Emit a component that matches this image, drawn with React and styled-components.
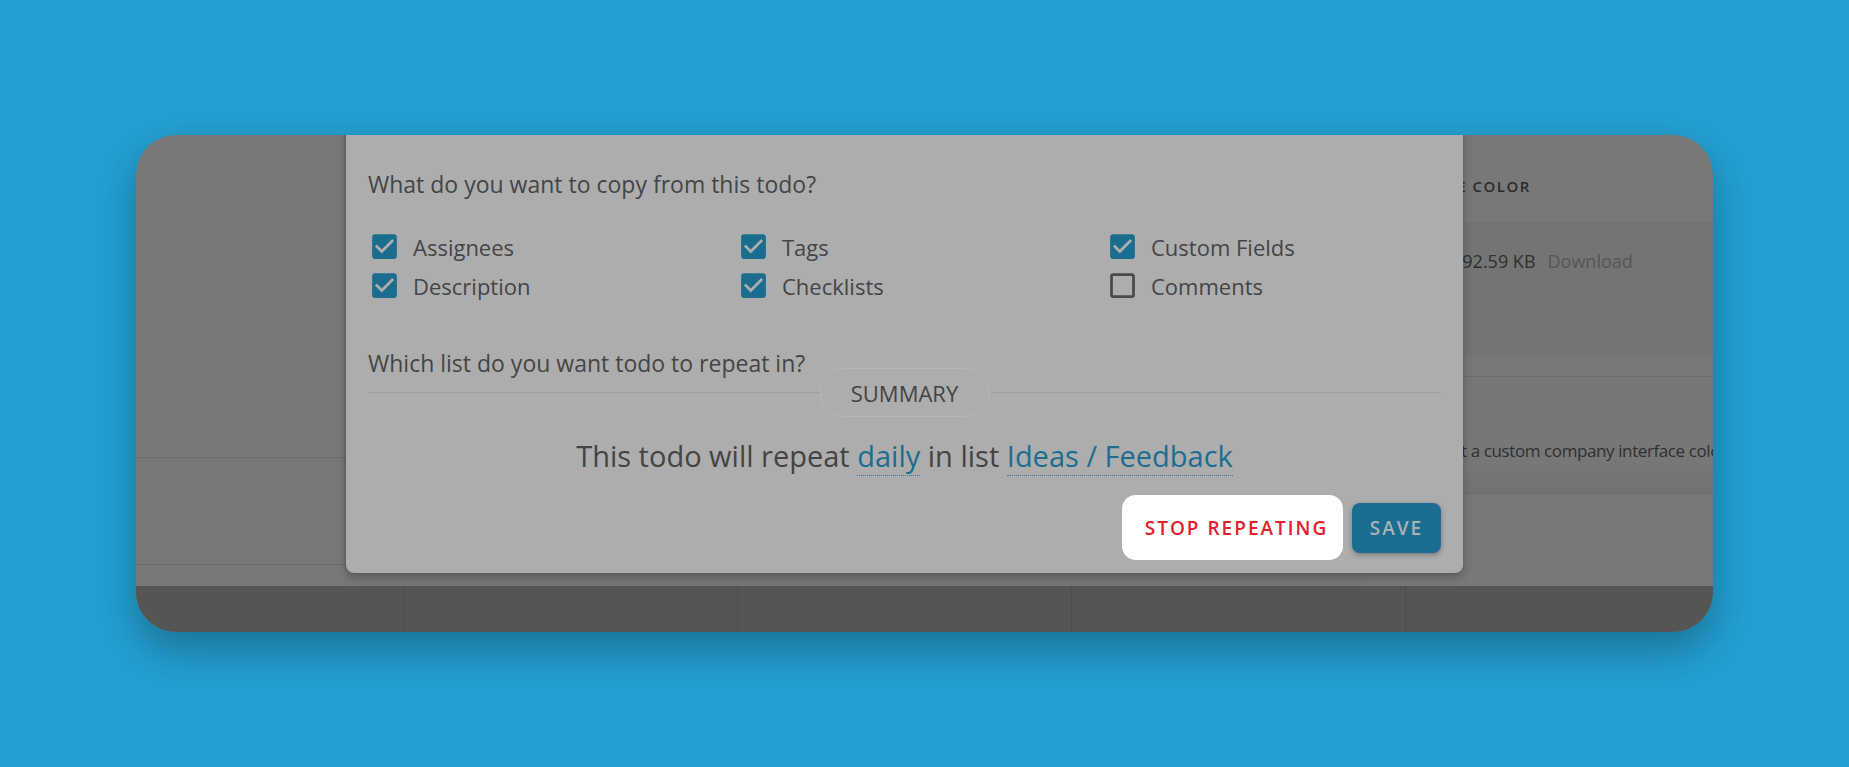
import React from 'react';
import styled, { createGlobalStyle } from 'styled-components';

const GlobalStyle = createGlobalStyle`
  html, body {
    margin: 0;
    padding: 0;
  }
  body {
    background: #239fd1;
    font-family: "Open Sans", "Noto Sans", sans-serif;
  }
`

const OPTIONS = [
  { label: 'Assignees', checked: true },
  { label: 'Tags', checked: true },
  { label: 'Custom Fields', checked: true },
  { label: 'Description', checked: true },
  { label: 'Checklists', checked: true },
  { label: 'Comments', checked: false },
]

// material check_box / check_box_outline_blank
const CHECKED = 'M19 3H5c-1.11 0-2 .9-2 2v14c0 1.1.89 2 2 2h14c1.11 0 2-.9 2-2V5c0-1.1-.89-2-2-2zm-9 14l-5-5 1.41-1.41L10 14.17l7.59-7.59L19 8l-9 9z'
const UNCHECKED = 'M19 5v14H5V5h14m0-2H5c-1.1 0-2 .9-2 2v14c0 1.1.9 2 2 2h14c1.1 0 2-.9 2-2V5c0-1.1-.9-2-2-2z'

const CheckIcon = ({ checked }) => (
  <BoxIcon viewBox="0 0 24 24" $checked={checked}>
    <path d={checked ? CHECKED : UNCHECKED} />
  </BoxIcon>
)

const App = () => {
  return (
    <Page>
      <GlobalStyle />
      <Card>
        <Workspace>
          <Sidebar>
            <SideBlock $h={322} />
            <SideBlock $h={106} />
          </Sidebar>
          <Board />
          <SettingsPanel>
            <PanelHead>INTERFACE COLOR</PanelHead>
            <PanelRow $h={135} $indent={86} $top={27} $shade>
              <FileSize>192.59 KB</FileSize>
              <FileLink>Download</FileLink>
            </PanelRow>
            <PanelGap />
            <PanelRow $h={118} $indent={77} $top={62} $fade>
              <PanelText>Set a custom company interface color for every member</PanelText>
            </PanelRow>
          </SettingsPanel>
        </Workspace>
        <Footer>
          <FooterCell />
          <FooterCell />
          <FooterCell />
          <FooterCell />
          <FooterCell />
        </Footer>

        <Modal>
          <Question>What do you want to copy from this todo?</Question>
          <OptionsGrid>
            {OPTIONS.map((o) => (
              <Option key={o.label}>
                <CheckIcon checked={o.checked} />
                {o.label}
              </Option>
            ))}
          </OptionsGrid>
          <Question $gap={42}>Which list do you want todo to repeat in?</Question>
          <SummaryRule>
            <RuleLine />
            <Pill>SUMMARY</Pill>
            <RuleLine />
          </SummaryRule>
          <Sentence>
            This todo will repeat <Pick>daily</Pick> in list <Pick>Ideas / Feedback</Pick>
          </Sentence>
          <Actions>
            <StopButton>STOP REPEATING</StopButton>
            <SaveButton>SAVE</SaveButton>
          </Actions>
        </Modal>
      </Card>
    </Page>
  )
};

export default App;

const Page = styled.div`
  min-height: 100vh;
  display: flex;
  align-items: center;
  justify-content: center;
`
const Card = styled.div`
  position: relative;
  width: 1577px;
  height: 497px;
  border-radius: 40px;
  overflow: hidden;
  background: #787878;
  display: flex;
  flex-direction: column;
  box-shadow: 0 18px 40px rgba(0, 0, 0, 0.28);
`
const Workspace = styled.div`
  height: 451px;
  display: grid;
  grid-template-columns: 210px 1fr 347px;
`
const Sidebar = styled.div`
  display: flex;
  flex-direction: column;
`
const SideBlock = styled.div`
  height: ${(p) => p.$h}px;
  border-bottom: 1px solid #6c6c6c;
`
const Board = styled.div`
  background: #777777;
`
const SettingsPanel = styled.div`
  display: flex;
  flex-direction: column;
  overflow: hidden;
`
const PanelHead = styled.div`
  height: 87px;
  box-sizing: border-box;
  padding: 14px 0 0 9px;
  display: flex;
  align-items: center;
  font-size: 15px;
  font-weight: 600;
  letter-spacing: 1.5px;
  color: #2b2b2b;
`
const PanelRow = styled.div`
  height: ${(p) => p.$h}px;
  box-sizing: border-box;
  padding: ${(p) => p.$top}px 0 0 ${(p) => p.$indent}px;
  display: flex;
  gap: 12px;
  white-space: nowrap;
  background: ${(p) => (p.$shade ? '#747474' : p.$fade ? 'linear-gradient(#777777 75%, #717171)' : 'transparent')};
`
const PanelGap = styled.div`
  height: 19px;
  border-bottom: 1px solid #6b6b6b;
`
const FileSize = styled.span`
  font-size: 18px;
  line-height: 24px;
  color: #2f2f2f;
`
const FileLink = styled.span`
  font-size: 18px;
  line-height: 24px;
  color: #565656;
`
const PanelText = styled.span`
  font-size: 17px;
  line-height: 24px;
  letter-spacing: -0.4px;
  color: #2f2f2f;
`
const Footer = styled.div`
  flex: 1;
  background: #555555;
  display: grid;
  grid-template-columns: 268px repeat(4, 334px);
`
const FooterCell = styled.div`
  border-right: 1px solid #4d4d4d;
`

const Modal = styled.div`
  position: absolute;
  left: 210px;
  top: -20px;
  width: 1117px;
  box-sizing: border-box;
  padding: 53px 22px 13px;
  background: #adadad;
  border-radius: 8px;
  box-shadow: 0 4px 10px rgba(0, 0, 0, 0.25), -1px 0 2px rgba(0, 0, 0, 0.15);
  color: #454545;
`
const Question = styled.p`
  margin: ${(p) => p.$gap || 0}px 0 0;
  font-size: 23px;
  line-height: 32px;
`
const OptionsGrid = styled.div`
  margin-top: 27px;
  display: grid;
  grid-template-columns: 369px 369px 1fr;
  grid-auto-rows: 39px;
`
const Option = styled.label`
  display: flex;
  align-items: center;
  gap: 12px;
  font-size: 22px;
`
const BoxIcon = styled.svg`
  width: 33px;
  height: 33px;
  flex-shrink: 0;
  fill: ${(p) => (p.$checked ? '#1b6d90' : '#4a4a4a')};
`
const SummaryRule = styled.div`
  margin-top: -11px;
  height: 49px;
  display: flex;
  align-items: center;
`
const RuleLine = styled.div`
  flex: 1;
  height: 1px;
  background: #9fa0a7;
`
const Pill = styled.div`
  width: 170px;
  height: 49px;
  box-sizing: border-box;
  border: 1px solid #b6b6b6;
  border-radius: 25px;
  display: flex;
  align-items: center;
  justify-content: center;
  font-size: 22px;
  color: #444444;
`
const Sentence = styled.div`
  margin-top: 19px;
  font-size: 29px;
  line-height: 40px;
  text-align: center;
  color: #444444;
`
const Pick = styled.span`
  color: #1b6e92;
  border-bottom: 1px dotted #2a7ea3;
`
const Actions = styled.div`
  margin-top: 19px;
  display: flex;
  justify-content: flex-end;
  align-items: center;
  gap: 9px;
`
const StopButton = styled.button`
  width: 221px;
  height: 65px;
  padding: 0 0 0 8px;
  border: none;
  border-radius: 14px;
  background: #ffffff;
  color: #e3202a;
  font-family: inherit;
  font-size: 19px;
  font-weight: 600;
  letter-spacing: 2px;
`
const SaveButton = styled.button`
  width: 89px;
  height: 50px;
  padding: 0;
  border: none;
  border-radius: 8px;
  background: #1b6d91;
  color: #a9b2b8;
  font-family: inherit;
  font-size: 19px;
  font-weight: 600;
  letter-spacing: 2px;
  box-shadow: 0 2px 5px rgba(0, 0, 0, 0.3);
`
